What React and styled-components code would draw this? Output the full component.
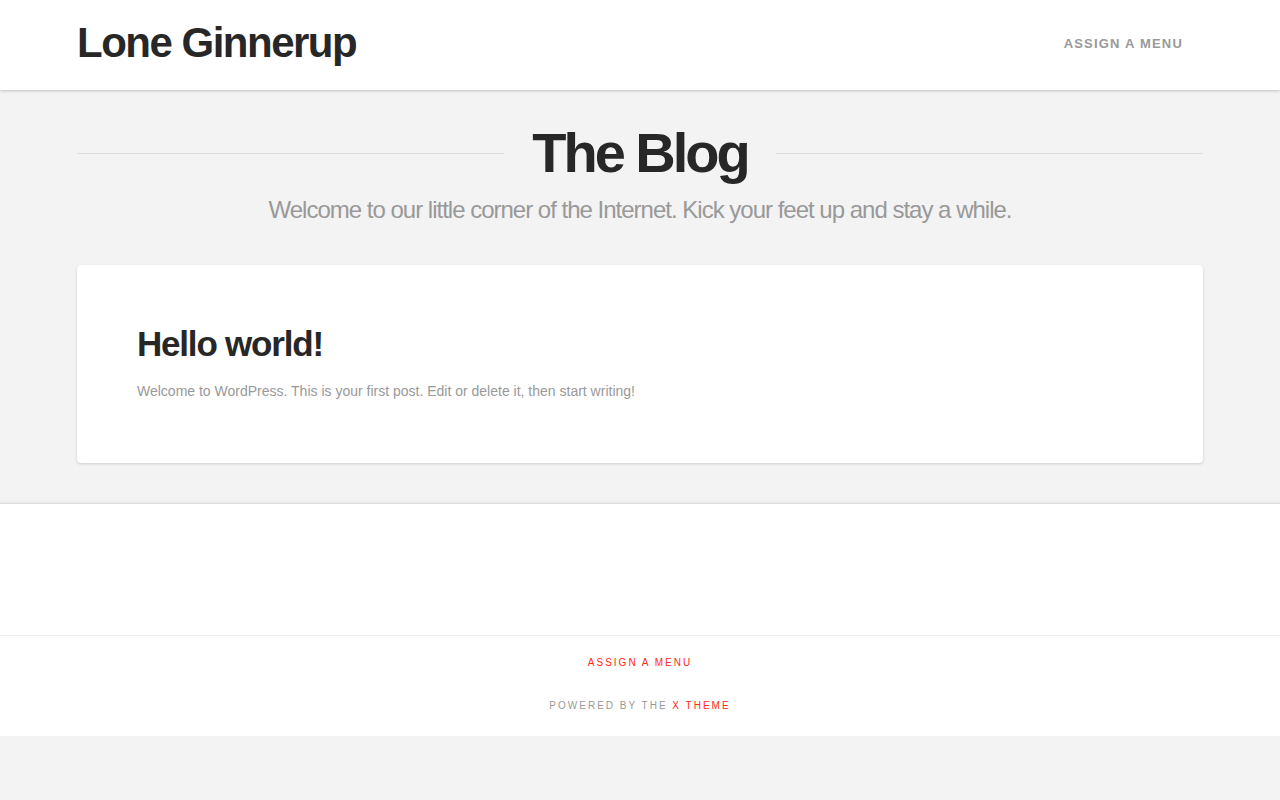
import styled, {createGlobalStyle} from 'styled-components';

const GlobalStyle = createGlobalStyle`
  html, body {
    margin: 0;
    padding: 0;
    background-color: #f3f3f3;
    font-family: "Liberation Sans", Arial, sans-serif;
  }
  * {
    box-sizing: border-box;
  }
`;

const Masthead = styled.header`
  background-color: #fff;
  height: 90px;
  box-shadow: 0 1px 3px rgba(0, 0, 0, 0.2);
  position: relative;
  z-index: 2;
`;

const Wrap = styled.div`
  width: 1126px;
  margin: 0 auto;
`;

const NavBar = styled(Wrap)`
  height: 90px;
  display: flex;
  justify-content: space-between;
  align-items: center;
`;

const Brand = styled.a`
  font-size: 42px;
  font-weight: 700;
  letter-spacing: -1.5px;
  color: #272727;
  text-decoration: none;
  line-height: 1;
  margin-top: -4px;
`;

const NavLink = styled.a`
  font-size: 13px;
  font-weight: 700;
  letter-spacing: 1.2px;
  color: #999;
  text-transform: uppercase;
  text-decoration: none;
  margin-right: 20px;
  margin-top: -4px;
`;

const Landmark = styled(Wrap)`
  padding: 32px 0 40px;
  text-align: center;
`;

const TitleRow = styled.div`
  display: flex;
  align-items: center;
  gap: 28px;

  &::before,
  &::after {
    content: '';
    flex: 1;
    height: 1px;
    background-color: #ddd;
    margin-top: 2px;
  }
`;

const BlogTitle = styled.h1`
  margin: 0;
  font-size: 56px;
  font-weight: 700;
  letter-spacing: -3px;
  color: #272727;
  line-height: 61px;
`;

const Subtitle = styled.p`
  margin: 11px 0 0;
  font-size: 24px;
  letter-spacing: -1px;
  color: #999;
  line-height: 1.3;
`;

const Main = styled(Wrap)`
  padding-bottom: 40px;
`;

const Post = styled.article`
  background-color: #fff;
  border-radius: 4px;
  box-shadow: 0 1px 3px rgba(0, 0, 0, 0.15);
  padding: 60px 60px 60px;
`;

const PostTitle = styled.h2`
  margin: 0;
  font-size: 35px;
  font-weight: 700;
  letter-spacing: -1.2px;
  color: #272727;
  line-height: 1.1;
`;

const PostText = styled.p`
  margin: 16px 0 0;
  font-size: 14px;
  color: #999;
  line-height: 1.7;
`;

const WidgetArea = styled.div`
  background-color: #fff;
  height: 132px;
  border-top: 1px solid #ddd;
  box-shadow: 0 -1px 2px rgba(0, 0, 0, 0.06);
`;

const Colophon = styled.footer`
  background-color: #fff;
  border-top: 1px solid #eee;
  height: 101px;
  padding-top: 16px;
  text-align: center;
`;

const FooterMenu = styled.a`
  display: inline-block;
  font-size: 10px;
  letter-spacing: 2px;
  color: #ff2a13;
  text-transform: uppercase;
  text-decoration: none;
`;

const Credit = styled.p`
  margin: 30px 0 0;
  font-size: 10px;
  letter-spacing: 2px;
  color: #999;
  text-transform: uppercase;

  a {
    color: #ff2a13;
    text-decoration: none;
  }
`;

const App = () => {
  return (
    <>
      <GlobalStyle />
      <Masthead>
        <NavBar>
          <Brand href="#">Lone Ginnerup</Brand>
          <NavLink href="#">Assign a Menu</NavLink>
        </NavBar>
      </Masthead>
      <Landmark>
        <TitleRow>
          <BlogTitle>The Blog</BlogTitle>
        </TitleRow>
        <Subtitle>
          Welcome to our little corner of the Internet. Kick your feet up and
          stay a while.
        </Subtitle>
      </Landmark>
      <Main>
        <Post>
          <PostTitle>Hello world!</PostTitle>
          <PostText>
            Welcome to WordPress. This is your first post. Edit or delete it,
            then start writing!
          </PostText>
        </Post>
      </Main>
      <WidgetArea />
      <Colophon>
        <FooterMenu href="#">Assign a Menu</FooterMenu>
        <Credit>
          Powered by The <a href="#">X Theme</a>
        </Credit>
      </Colophon>
    </>
  );
};

export default App;
